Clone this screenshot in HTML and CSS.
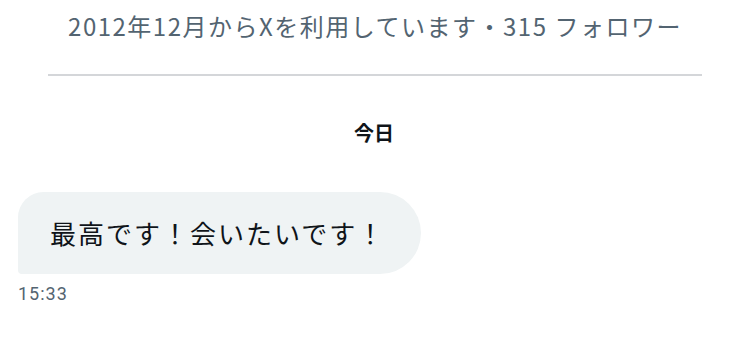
FILE: index.html
```html
<!DOCTYPE html>
<html lang="ja">
<head>
  <meta charset="UTF-8" />
  <title>メッセージ</title>
  <link rel="stylesheet" href="styles.css">
</head>
<body>
  <div class="conversation">
    <div class="profileInfo">2012年12月からXを利用しています・315 フォロワー</div>
    <hr class="divider" />
    <div class="dayLabel">今日</div>
    <div class="message">
      <div class="bubble">最高です！会いたいです！</div>
      <div class="time">15:33</div>
    </div>
  </div>
</body>
</html>
```

FILE: styles.css
```css
body {
  margin: 0;
  background: #fff;
  font-family: "Noto Sans CJK JP", "Noto Sans", sans-serif;
  color: #0f1419;
}

.conversation {
  width: 750px;
  height: 363px;
  overflow: hidden;
}

.profileInfo {
  padding-top: 12px;
  height: 28px;
  line-height: 28px;
  text-align: center;
  font-size: 24px;
  color: #536471;
  letter-spacing: 1.5px;
}

.divider {
  margin: 34px 48px 0 48px;
  border: none;
  border-top: 2px solid #d4d6d9;
  height: 0;
}

.dayLabel {
  margin-top: 43px;
  height: 28px;
  line-height: 28px;
  text-align: center;
  font-size: 20px;
  font-weight: bold;
  padding-right: 2px;
}

.message {
  margin-top: 45px;
  padding-left: 18px;
}

.bubble {
  display: inline-block;
  box-sizing: border-box;
  height: 82px;
  line-height: 82px;
  padding: 0 36px 0 32px;
  background: #eff3f4;
  border-radius: 26px 42px 42px 4px;
  font-size: 26px;
  letter-spacing: 2px;
}

.time {
  margin-top: 10px;
  height: 20px;
  line-height: 20px;
  font-family: Roboto, "Noto Sans", sans-serif;
  font-size: 18px;
  color: #536471;
  letter-spacing: 1px;
}
```
